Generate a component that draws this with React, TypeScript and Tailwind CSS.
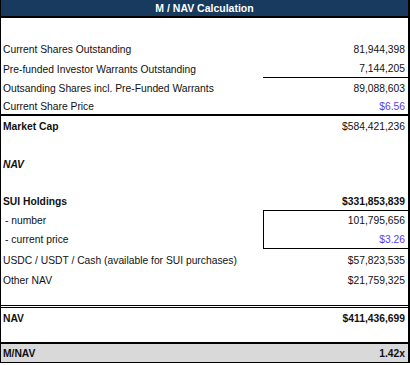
import type { ReactNode } from 'react';

type RowProps = {
  label?: ReactNode;
  value?: ReactNode;
  className?: string;
  labelClass?: string;
  valueClass?: string;
};

// One spreadsheet line: label on the left, figure in the right-hand column.
// Text sits a little low in each cell, like a bottom-aligned sheet.
function Row({ label, value, className = '', labelClass = '', valueClass = '' }: RowProps) {
  return (
    <div className={`flex items-stretch ${className}`}>
      <div className={`flex flex-1 items-center pl-[2px] pt-[3px] ${labelClass}`}>{label}</div>
      <div className={`flex w-[145px] items-center justify-end pr-[3px] pt-[3px] ${valueClass}`}>{value}</div>
    </div>
  );
}

export default function App() {
  const input = 'text-[#5b3cf5] pr-[1px]';

  return (
    <div className="w-[410px] bg-white font-['Liberation_Sans',Arial,sans-serif] text-[10.3px] leading-none text-[#111]">
      <div className="flex flex-col border-b border-l border-r-2 border-black">
        <div className="flex h-[18px] items-center justify-center border-b-2 border-black bg-[#173a5e] pt-[1px] text-[10.5px] font-bold text-white">
          M / NAV Calculation
        </div>

        <div className="h-[21px]" />
        <Row className="h-[20px]" label="Current Shares Outstanding" value="81,944,398" />
        <Row
          className="h-[19px]"
          label="Pre-funded Investor Warrants Outstanding"
          value="7,144,205"
          valueClass="border-b border-black"
        />
        <Row className="h-[20px]" label="Outsanding Shares incl. Pre-Funded Warrants" value="89,088,603" />
        <Row
          className="h-[18px] border-b-2 border-black"
          label="Current Share Price"
          value="$6.56"
          valueClass={input}
        />

        <Row className="h-[19px] font-bold" label="Market Cap" value={<span className="font-normal">$584,421,236</span>} />
        <div className="h-[19px]" />
        <Row className="h-[19px]" label="NAV" labelClass="font-bold italic" />
        <div className="h-[19px]" />

        <Row className="h-[18px] font-bold" label="SUI Holdings" value="$331,853,839" />
        <Row
          className="h-[19px]"
          label=" - number"
          labelClass="pl-[4px]"
          value="101,795,656"
          valueClass="border-l border-t border-black"
        />
        <Row
          className="h-[20px]"
          label=" - current price"
          labelClass="pl-[4px]"
          value="$3.26"
          valueClass={`border-b border-l border-black ${input}`}
        />
        <Row className="h-[21px]" label="USDC / USDT / Cash (available for SUI purchases)" value="$57,823,535" />
        <Row className="h-[20px]" label="Other NAV" value="$21,759,325" />
        <div className="h-[15px]" />

        <Row
          className="h-[22px] border-t-[3px] border-double border-black font-bold"
          label="NAV"
          value="$411,436,699"
        />
        <div className="h-[15px]" />

        <Row
          className="h-[20px] border-t-2 border-black bg-[#d9d9d9] font-bold"
          label="M/NAV"
          value="1.42x"
        />
      </div>
    </div>
  );
}
